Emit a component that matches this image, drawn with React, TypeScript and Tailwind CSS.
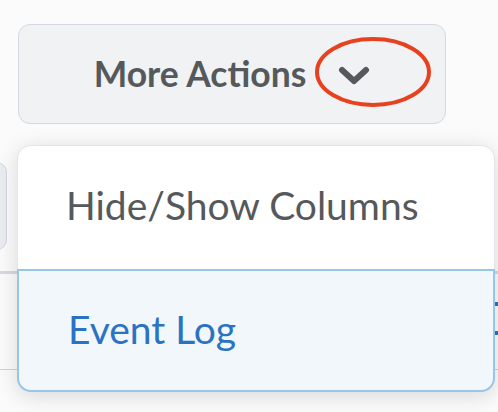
import { ChevronDown } from 'lucide-react';

const font = { fontFamily: 'Lato, "Open Sans", sans-serif' };

export default function App() {
  return (
    <div className="relative w-[498px] h-[412px] overflow-hidden bg-[#fbfbfb]" style={font}>
      {/* More Actions button */}
      <div className="pt-6 pl-[18px]">
        <button className="relative w-[428px] h-[100px] flex items-center justify-center gap-[32px] rounded-[12px] border-[1.5px] border-[#d3d9e3] bg-[#f1f2f4] text-[#55595c]">
          <span className="text-[35.5px] font-bold leading-none">More Actions</span>
          <svg width="32" height="20" viewBox="0 0 32 20" className="mt-1">
            <path d="M4 4 L16 15 L28 4" fill="none" stroke="#55595c" strokeWidth="6" strokeLinecap="round" strokeLinejoin="round" />
          </svg>
          <svg className="absolute left-[295px] top-[11px]" width="120" height="74" viewBox="0 0 120 74">
            <ellipse cx="59" cy="36" rx="56" ry="33" fill="none" stroke="#e6421f" strokeWidth="4" />
          </svg>
        </button>
      </div>

      {/* content behind the menu */}
      <div className="mt-[38px] -ml-[60px] w-[67px] h-[88px] rounded-[10px] border-[1.5px] border-[#d3d9e3] bg-[#eaecef]" />
      <div className="mt-[21px] h-[3px] bg-[#d6d9de]" />
      <div className="flex justify-end pt-[28px]">
        <div className="w-[3px] h-[4px] bg-[#2a72c4]" />
      </div>
      <div className="flex justify-end pt-[25px]">
        <div className="w-[3px] h-[4px] bg-[#2a72c4]" />
      </div>
      <div className="mt-[34px] h-px bg-[#d0d4d9]" />

      {/* dropdown menu */}
      <div className="absolute left-[17px] top-[145px] w-[478px] h-[247px] flex flex-col rounded-[14px] border border-[#e2e6eb] bg-white shadow-[0_4px_22px_rgba(0,0,0,0.14)]">
        <div className="h-[123px] flex items-center pl-[48px] text-[39px] text-[#55595c] leading-none pb-[4px]">
          Hide/Show Columns
        </div>
        <div className="flex-1 -mx-px -mb-px flex items-center pl-[49px] rounded-b-[14px] border-2 border-[#98c6e6] bg-[#f2f7fc] text-[39px] text-[#2a72c4] leading-none pb-[2px]">
          Event Log
        </div>
      </div>
    </div>
  );
}
